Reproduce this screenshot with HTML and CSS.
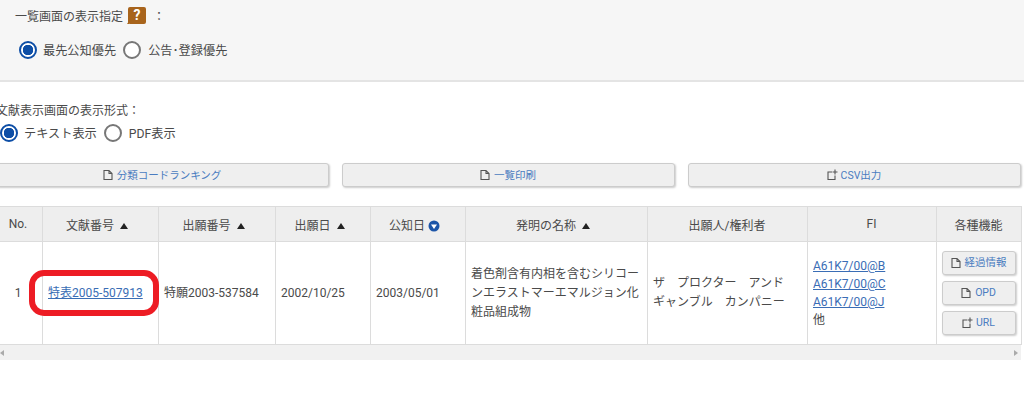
FILE: index.html
```html
<!DOCTYPE html>
<html lang="ja">
<head>
<meta charset="utf-8">
<title>文献一覧</title>
<link rel="stylesheet" href="styles.css">
</head>
<body>
<section class="panel">
  <div class="panel-title">一覧画面の表示指定<span class="help">?</span><span class="colon">：</span></div>
  <div class="radios panel-radios">
    <span class="radio on"></span><span class="radio-label">最先公知優先</span>
    <span class="radio"></span><span class="radio-label second">公告･登録優先</span>
  </div>
</section>
<section class="format">
  <div class="format-title">文献表示画面の表示形式：</div>
  <div class="radios">
    <span class="radio on"></span><span class="radio-label">テキスト表示</span>
    <span class="radio"></span><span class="radio-label second">PDF表示</span>
  </div>
</section>
<div class="actions">
  <a class="btn"><svg class="ico" viewBox="0 0 12 12"><path d="M2 1.500h5l3 3v6H2z M7 1.500v3h3"/></svg>分類コードランキング</a>
  <a class="btn"><svg class="ico" viewBox="0 0 12 12"><path d="M2 1.500h5l3 3v6H2z M7 1.500v3h3"/></svg>一覧印刷</a>
  <a class="btn"><svg class="ico" viewBox="0 0 12 12"><path d="M6 3H2v7.500h7V6.500M9 .5v5M6.500 3h5"/></svg>CSV出力</a>
</div>
<div class="table-wrap">
  <table class="results">
    <colgroup>
      <col class="c1"><col class="c2"><col class="c3"><col class="c4"><col class="c5"><col class="c6"><col class="c7"><col class="c8"><col class="c9">
    </colgroup>
    <thead>
      <tr>
        <th>No.</th>
        <th>文献番号<span class="up"></span></th>
        <th>出願番号<span class="up"></span></th>
        <th>出願日<span class="up"></span></th>
        <th>公知日<svg class="sorted" viewBox="0 0 12 12"><circle cx="6" cy="6" r="5.500"/><path d="M3 4.500h6L6 9z"/></svg></th>
        <th>発明の名称<span class="up"></span></th>
        <th>出願人/権利者</th>
        <th>FI</th>
        <th>各種機能</th>
      </tr>
    </thead>
    <tbody>
      <tr>
        <td class="center">1</td>
        <td><a class="link">特表2005-507913</a></td>
        <td>特願2003-537584</td>
        <td>2002/10/25</td>
        <td>2003/05/01</td>
        <td class="title">着色剤含有内相を含むシリコーンエラストマーエマルジョン化粧品組成物</td>
        <td class="title">ザ　プロクター　アンド　ギャンブル　カンパニー</td>
        <td class="fi"><a class="link">A61K7/00@B</a><br><a class="link">A61K7/00@C</a><br><a class="link">A61K7/00@J</a><br>他</td>
        <td class="tools">
          <a class="btn small"><svg class="ico" viewBox="0 0 12 12"><path d="M2 1.500h5l3 3v6H2z M7 1.500v3h3"/></svg>経過情報</a>
          <a class="btn small"><svg class="ico" viewBox="0 0 12 12"><path d="M2 1.500h5l3 3v6H2z M7 1.500v3h3"/></svg>OPD</a>
          <a class="btn small"><svg class="ico" viewBox="0 0 12 12"><path d="M6 3H2v7.500h7V6.500M9 .5v5M6.500 3h5"/></svg>URL</a>
        </td>
      </tr>
    </tbody>
  </table>
  <div class="scrollbar"><span class="arrow left"></span><span class="arrow right"></span></div>
</div>
<div class="highlight"></div>
</body>
</html>
```
FILE: styles.css
```css
html, body {
  margin: 0;
  padding: 0;
  background: #fff;
  overflow: hidden;
}
body {
  width: 1024px;
  height: 406px;
  position: relative;
  font-family: Roboto, "Noto Sans CJK JP", sans-serif;
  font-size: 12px;
  color: #4a4a4a;
}
.panel {
  height: 80px;
  background: #f6f6f6;
  border-bottom: 2px solid #e4e4e4;
}
.panel-title {
  display: flex;
  align-items: center;
  height: 30px;
  padding-left: 15px;
}
.help {
  position: relative;
  width: 18px;
  height: 17px;
  margin-left: 5px;
  background: #a8641c;
  border-radius: 2px;
  color: #fff;
  font-weight: 700;
  font-size: 14px;
  line-height: 17px;
  text-align: center;
}
.help::after {
  content: "";
  position: absolute;
  left: -1px;
  bottom: 0;
  border-bottom: 3px solid #a8641c;
  border-left: 2px solid transparent;
}
.colon {
  margin-left: 7px;
}
.radios {
  display: flex;
  align-items: center;
}
.panel-radios {
  margin-top: 11px;
  padding-left: 19px;
}
.radio {
  width: 18px;
  height: 18px;
  box-sizing: border-box;
  border: 2px solid #777;
  border-radius: 50%;
  background: #fff;
  flex: none;
}
.radio.on {
  border-color: #0d4ea6;
  background: radial-gradient(circle, #0d4ea6 0 5px, #fff 5.500px);
}
.radio-label {
  margin: 0 7px 0 6px;
  font-size: 12.200px;
}
.radio-label.second {
  margin-left: 7px;
}
.format {
  margin-left: -5px;
  padding-top: 20px;
}
.format-title {
  height: 18px;
  line-height: 18px;
  padding-left: 1px;
}
.format .radios {
  margin-top: 4px;
  padding-left: 5px;
}
.actions {
  display: flex;
  gap: 13px;
  margin: 21px 3px 0 -4px;
}
.btn {
  flex: 1;
  display: flex;
  align-items: center;
  justify-content: center;
  height: 24px;
  box-sizing: border-box;
  padding: 0 2px 1px 0;
  background: #efefef;
  border: 1px solid #ccc;
  border-radius: 3px;
  box-shadow: 1px 1px 2px #ccc;
  color: #4a7cc0;
  font-size: 10.500px;
}
.ico {
  width: 12px;
  height: 12px;
  margin-right: 3px;
  fill: none;
  stroke: #555;
  stroke-width: 1.100;
}
.table-wrap {
  margin: 19px 3px 0 -6px;
}
.results {
  width: 1027px;
  table-layout: fixed;
  border-collapse: collapse;
}
.c1 { width: 48px; }
.c2 { width: 116px; }
.c3 { width: 117px; }
.c4 { width: 95px; }
.c5 { width: 95px; }
.c6 { width: 182px; }
.c7 { width: 160px; }
.c8 { width: 129px; }
.c9 { width: 85px; }
.results th, .results td {
  border: 1px solid #dcdcdc;
  padding: 0 6px 0 5px;
  font-weight: 400;
}
.results th {
  height: 34px;
  background: #eee;
  text-align: center;
}
.results td {
  height: 102px;
  line-height: 19px;
}
.results td.center {
  text-align: center;
}
.results td.fi {
  line-height: 18px;
}
.up {
  display: inline-block;
  margin: 0 6px 0 6px;
  border: 4px solid transparent;
  border-top: 0;
  border-bottom: 6px solid #222;
  vertical-align: 1px;
}
.sorted {
  width: 12px;
  height: 12px;
  margin: 0 6px 0 3px;
  vertical-align: -2px;
}
.sorted circle {
  fill: #1c55a8;
}
.sorted path {
  fill: #fff;
}
.link {
  color: #3a6db5;
  text-decoration: underline;
}
.results td.tools {
  padding: 0 5px;
}
.btn.small {
  width: 74px;
  margin-bottom: 6px;
}
.btn.small:last-child {
  margin-bottom: 0;
}
.scrollbar {
  display: flex;
  justify-content: space-between;
  align-items: center;
  height: 15px;
  background: #f1f1f1;
  padding: 0 3px 0 6px;
}
.arrow {
  border: 3px solid transparent;
}
.arrow.left {
  border-right: 4px solid #aaa;
  border-left: 0;
}
.arrow.right {
  border-left: 4px solid #aaa;
  border-right: 0;
}
.highlight {
  position: absolute;
  left: 29px;
  top: 270px;
  width: 130px;
  height: 46px;
  box-sizing: border-box;
  border: 6px solid #ed1c24;
  border-radius: 15px;
}
```
